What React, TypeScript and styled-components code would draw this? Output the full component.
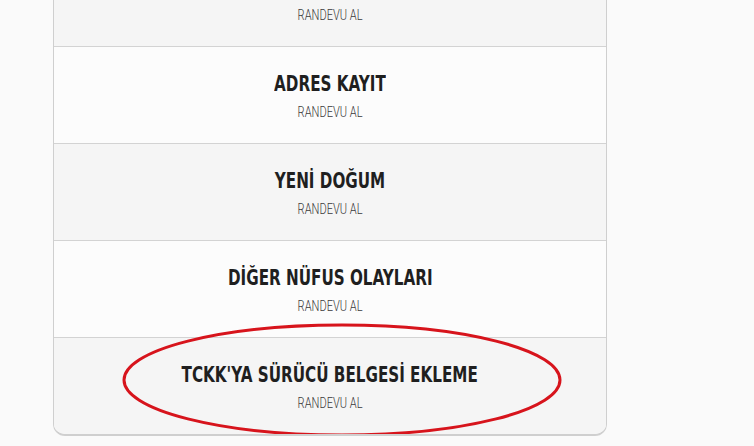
import React from "react";
import styled, { createGlobalStyle } from "styled-components";

const GlobalStyle = createGlobalStyle`
  html, body {
    margin: 0;
    padding: 0;
    background: #fafafa;
    overflow: hidden;
  }
`;

const Page = styled.div`
  width: 754px;
  height: 446px;
  overflow: hidden;
`;

const Card = styled.div`
  position: relative;
  width: 552px;
  margin: -52px 0 0 53px;
  border: 1px solid #cfcfcf;
  border-bottom-width: 2px;
  border-radius: 0 0 12px 12px;
  overflow: hidden;
`;

const Row = styled.div<{ shaded?: boolean }>`
  display: flex;
  flex-direction: column;
  align-items: center;
  gap: 7px;
  padding: 24px 0 23px;
  background: ${(p) => (p.shaded ? "#f5f5f5" : "#fcfcfc")};
  border-top: 1px solid #d3d3d3;
  &:first-child {
    border-top: none;
    padding-top: 25px;
  }
  cursor: pointer;
`;

/* the original uses a condensed face; squeeze a regular one */
const Title = styled.div`
  display: inline-block;
  font-family: "DejaVu Sans", sans-serif;
  font-weight: 700;
  font-size: 22px;
  line-height: 26px;
  color: #1f1f1f;
  white-space: nowrap;
  transform: scaleX(0.69);
`;

const Sub = styled.div`
  display: inline-block;
  font-family: Roboto, sans-serif;
  font-weight: 300;
  font-size: 14px;
  line-height: 16px;
  color: #3a3a3a;
  white-space: nowrap;
  transform: scaleX(0.79);
`;

const Mark = styled.svg`
  position: absolute;
  left: 67px;
  top: 372px;
  pointer-events: none;
`;

const items = [
  "KİMLİK KARTI",
  "ADRES KAYIT",
  "YENİ DOĞUM",
  "DİĞER NÜFUS OLAYLARI",
  "TCKK'YA SÜRÜCÜ BELGESİ EKLEME",
];

const App: React.FC = () => {
  return (
    <Page>
      <GlobalStyle />
      <Card>
        {items.map((t, i) => (
          <Row key={t} shaded={i % 2 === 0}>
            <Title>{t}</Title>
            <Sub>RANDEVU AL</Sub>
          </Row>
        ))}
        <Mark width="444" height="118" viewBox="0 0 444 118">
          <ellipse cx="221" cy="59" rx="218" ry="55" fill="none" stroke="#d7141c" strokeWidth="3" />
        </Mark>
      </Card>
    </Page>
  );
};

export default App;
